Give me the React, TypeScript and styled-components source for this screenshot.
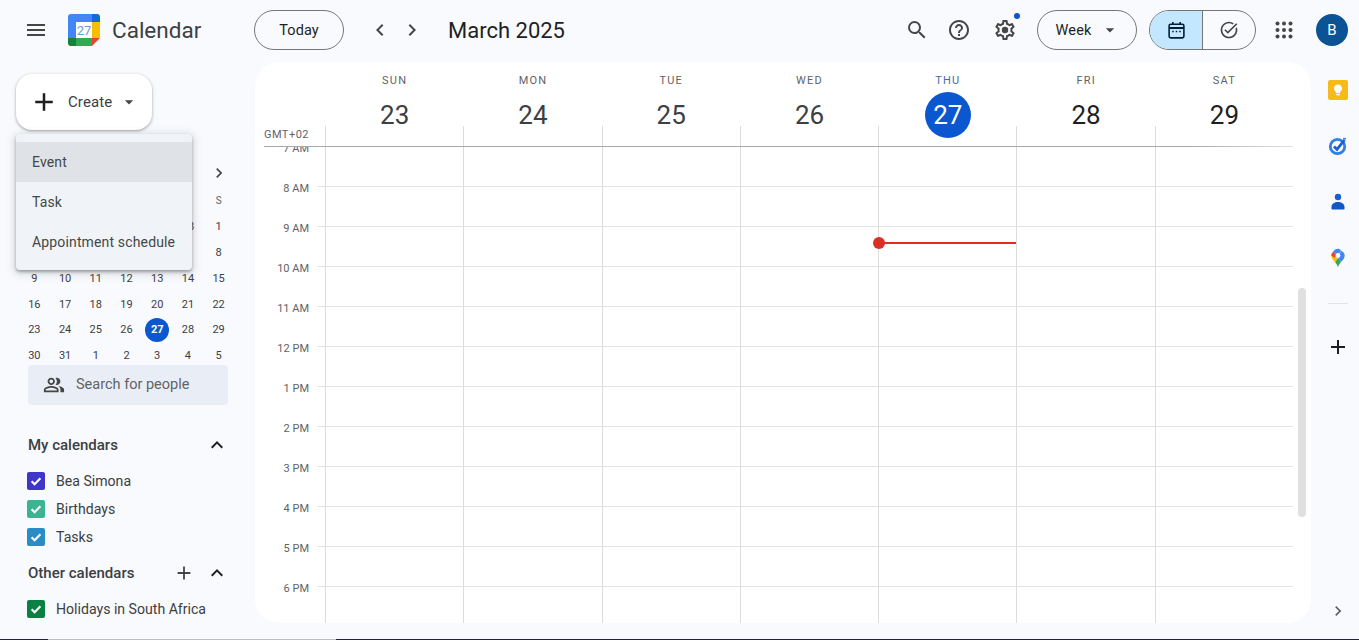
import React from "react";
import styled, { createGlobalStyle } from "styled-components";
import {
  MdMenu, MdSearch, MdHelpOutline, MdArrowDropDown, MdChevronLeft, MdChevronRight,
  MdAdd, MdExpandLess, MdOutlinePeopleAlt, MdOutlineTaskAlt,
} from "react-icons/md";

const FONT = `Roboto, "Noto Sans", Arial, sans-serif`;

const Global = createGlobalStyle`
  html, body { margin: 0; padding: 0; background: #f8fafd; }
  body { font-family: ${FONT}; color: #1f1f1f; overflow: hidden; }
  * { box-sizing: border-box; }
`;

const Page = styled.div`
  width: 1359px; height: 640px; display: flex; flex-direction: column; overflow: hidden; background: #f8fafd;
`;

/* ---------- top bar ---------- */
const TopBar = styled.header`
  height: 60px; flex: none; display: flex; align-items: center; padding-right: 11px;
`;
const Brand = styled.div`
  width: 254px; flex: none; display: flex; align-items: center; padding-left: 16px;
`;
const IconBtn = styled.button<{ $size?: number; $ml?: number; $color?: string }>`
  width: ${p => p.$size ?? 32}px; height: ${p => p.$size ?? 32}px; flex: none; padding: 0; border: 0; background: none;
  display: flex; align-items: center; justify-content: center; position: relative;
  margin-left: ${p => p.$ml ?? 0}px; color: ${p => p.$color ?? "#444746"};
`;
const BrandName = styled.span`
  font-size: 22.5px; color: #3c4043; margin-left: 12px;
`;
const PillBtn = styled.button<{ $w: number; $ml?: number }>`
  width: ${p => p.$w}px; height: 40px; flex: none; border: 1px solid #747775; border-radius: 20px; background: none;
  font: 400 14.5px ${FONT}; letter-spacing: .1px; color: #1f1f1f; display: flex; align-items: center; justify-content: center; padding: 0;
  margin-left: ${p => p.$ml ?? 0}px;
`;
const MonthTitle = styled.h1`
  margin: 0 0 0 20px; font-size: 22px; font-weight: 400; color: #1f1f1f;
`;
const TopRight = styled.div`
  margin-left: auto; display: flex; align-items: center;
`;
const Badge = styled.span`
  position: absolute; right: 5px; top: 3px; width: 6px; height: 6px; border-radius: 50%; background: #0b57d0;
`;
const WeekCaret = styled.span`
  display: flex; margin: 0 -2px 0 9px; color: #444746;
`;
const Toggle = styled.div`
  width: 107px; height: 40px; margin-left: 12px; display: flex; border: 1px solid #747775; border-radius: 20px; overflow: hidden;
`;
const ToggleSide = styled.div<{ $on?: boolean }>`
  flex: ${p => (p.$on ? "0 0 53px" : "1")}; display: flex; align-items: center; justify-content: center;
  background: ${p => (p.$on ? "#c2e7ff" : "none")}; color: ${p => (p.$on ? "#001d35" : "#444746")};
  border-right: ${p => (p.$on ? "1px solid #747775" : "0")};
`;
const AppsBtn = styled(IconBtn)`
  margin-right: -4px;
`;
const Avatar = styled.div`
  width: 32px; height: 32px; border-radius: 50%; margin-left: 16px; background: #0b5394; color: #fff;
  font-size: 15px; display: flex; align-items: center; justify-content: center;
`;

/* ---------- layout ---------- */
const Main = styled.div`
  flex: 1; min-height: 0; display: flex;
`;
const Sidebar = styled.aside`
  width: 255px; flex: none; display: flex; flex-direction: column; position: relative;
`;
const CreateBtn = styled.button`
  width: 136px; height: 56px; margin: 14px 0 0 16px; padding: 0 0 0 13px; border: 0; border-radius: 16px; background: #fff;
  box-shadow: 0 1px 2px rgba(60,64,67,.3), 0 1px 3px 1px rgba(60,64,67,.15);
  display: flex; align-items: center; font: 400 15px ${FONT}; letter-spacing: .1px; color: #3c4043; flex: none;
`;
const CreateLabel = styled.span`
  margin: 0 7px 0 9px;
`;
const CreateMenu = styled.ul`
  position: absolute; left: 16px; top: 74px; width: 176px; margin: 0; padding: 8px 0; list-style: none;
  background: #f0f4f9; border-radius: 4px; z-index: 5;
  box-shadow: 0 2px 3px rgba(60,64,67,.4), 0 2px 8px 2px rgba(60,64,67,.18);
`;
const MenuItem = styled.li<{ $active?: boolean }>`
  height: 40px; padding-left: 16px; display: flex; align-items: center; font-size: 14px; letter-spacing: .15px; color: #444746; white-space: nowrap;
  background: ${p => (p.$active ? "#dfe3e7" : "transparent")};
`;
const MiniHead = styled.div`
  height: 31px; margin-top: 27px; padding-left: 209px; flex: none; display: flex; align-items: center; color: #444746;
`;
const MiniGrid = styled.div`
  margin-left: 19px; width: 215px; display: grid; grid-template-columns: repeat(7, 1fr); grid-auto-rows: 25.8px; flex: none;
`;
const MiniCell = styled.div<{ $head?: boolean; $today?: boolean }>`
  display: flex; align-items: center; justify-content: center;
  font-size: ${p => (p.$head ? 10 : 11)}px; font-weight: ${p => (p.$today ? 700 : 400)}; color: ${p => (p.$head ? "#5f6368" : "#3c4043")};
  > span {
    width: 24px; height: 24px; flex: none; border-radius: 50%; display: flex; align-items: center; justify-content: center;
    background: ${p => (p.$today ? "#0b57d0" : "transparent")}; color: ${p => (p.$today ? "#fff" : "inherit")};
  }
`;
const PeopleSearch = styled.div`
  width: 200px; height: 40px; margin: -3.6px 0 0 28px; flex: none; display: flex; align-items: center; gap: 11px;
  padding-left: 15px; background: #e9eef6; border-radius: 4px; font-size: 14.5px; color: #5f6368; position: relative;
`;
const SectionHead = styled.div<{ $mt: number }>`
  width: 201px; height: 40px; margin: ${p => p.$mt}px 0 0 28px; flex: none; display: flex; align-items: center;
  color: #1f1f1f; font-size: 15px; font-weight: 500;
  > span { margin-right: auto; color: #3c4043; }
`;
const CalRow = styled.div<{ $mt?: number }>`
  height: 28px; margin: ${p => p.$mt ?? 0}px 0 0 27px; flex: none; display: flex; align-items: center; gap: 11px;
  font-size: 14.1px; color: #3c4043; white-space: nowrap;
`;
const Check = styled.span<{ $color: string }>`
  width: 18px; height: 18px; flex: none; border-radius: 2px; background: ${p => p.$color}; color: #fff;
  display: flex; align-items: center; justify-content: center;
`;

/* ---------- week panel ---------- */
const Panel = styled.section`
  width: 1056px; flex: none; margin: 2px 0 16px; background: #fff; border-radius: 24px; overflow: hidden; position: relative;
  display: flex; flex-direction: column;
`;
const WeekHead = styled.div`
  height: 84px; flex: none; display: grid; grid-template-columns: 70px repeat(7, 138.3px);
`;
const Gmt = styled.div`
  padding: 66px 16px 0 0; text-align: right; font-size: 11px; line-height: 14px; color: #5f6368; letter-spacing: .5px; white-space: nowrap;
`;
const DayHead = styled.div`
  position: relative; display: flex; flex-direction: column; align-items: center; padding: 12px 0 0 1px;
  &::before { content: ""; position: absolute; left: 0; top: 64px; bottom: 0; width: 1px; background: #dadce0; }
`;
const DayName = styled.div<{ $today?: boolean }>`
  font-size: 11px; line-height: 14px; font-weight: 400; letter-spacing: 1.2px; color: ${p => (p.$today ? "#3f6cae" : "#5f6368")};
`;
const DayNum = styled.div<{ $today?: boolean; $past?: boolean }>`
  width: 46px; height: 46px; margin-top: 4px; border-radius: 50%; display: flex; align-items: center; justify-content: center;
  font-size: 26px; position: relative; z-index: 1;
  background: ${p => (p.$today ? "#0b57d0" : "transparent")};
  color: ${p => (p.$today ? "#fff" : p.$past ? "#3c4043" : "#1f1f1f")};
`;
const HeadRule = styled.div`
  height: 1px; margin: 0 0 -1px 9px; width: 1030px; flex: none; position: relative; z-index: 2;
  background: linear-gradient(to right, #a8a8a8 0, #a8a8a8 90%, rgba(168,168,168,0) 100%);
`;
const Hours = styled.div`
  flex: 1; min-height: 0; overflow: hidden;
`;
const HourRow = styled.div`
  height: 40px; display: grid; grid-template-columns: 54px 8px 8px repeat(7, 138.3px);
`;
const HourLabel = styled.div`
  font-size: 11px; line-height: 14px; margin-top: -4px; text-align: right; color: #5f6368; white-space: nowrap;
`;
const Tick = styled.div`
  grid-column: 3; border-top: 1px solid #e3e3e3;
`;
const HourCell = styled.div`
  border-top: 1px solid #e3e3e3; border-left: 1px solid #dadce0; position: relative;
`;
const NowLine = styled.div`
  position: absolute; left: 0; right: 0; top: 15px; height: 2px; background: #d93025;
  &::before { content: ""; position: absolute; left: -6px; top: -5px; width: 12px; height: 12px; border-radius: 50%; background: #d93025; }
`;
const Thumb = styled.div`
  position: absolute; left: 1043px; top: 226px; width: 8px; height: 229px; border-radius: 4px; background: #e0e0e0; z-index: 3;
`;

/* ---------- right rail ---------- */
const Rail = styled.aside`
  width: 48px; flex: none; padding-top: 2px; display: flex; flex-direction: column; align-items: center; color: #1f1f1f;
`;
const RailSlot = styled.div`
  height: 56px; width: 100%; flex: none; display: flex; align-items: center; justify-content: center; padding-left: 6px;
`;
const RailDivider = styled.div`
  width: 20px; height: 1px; margin: 17px 0 0 6px; background: #e3e3e3; flex: none;
`;
const RailIcon = styled.div<{ $mt?: string; $mb?: number; $color?: string }>`
  flex: none; margin: ${p => p.$mt ?? "0"} 0 ${p => p.$mb ?? 0}px 6px; display: flex; color: ${p => p.$color ?? "#1f1f1f"};
`;
const BottomStrip = styled.div`
  height: 1px; flex: none; display: grid; grid-template-columns: 48px 288px 1fr;
`;
const StripPart = styled.i<{ $color: string }>`
  display: block; background: ${p => p.$color};
`;

/* ---------- drawings ---------- */
const Logo = () => (
  <svg width="32" height="32" viewBox="0 0 32 32" style={{ marginLeft: 12, flex: "none" }}>
    <path d="M3 0h21v8H8v16H0V3a3 3 0 0 1 3-3z" fill="#4285f4" />
    <path d="M24 0h5a3 3 0 0 1 3 3v5h-8z" fill="#1967d2" />
    <path d="M24 8h8v16h-8z" fill="#fbbc04" />
    <path d="M8 24h16v8H8z" fill="#34a853" />
    <path d="M0 24h8v8H3a3 3 0 0 1-3-3z" fill="#188038" />
    <path d="M24 24h8l-8 8z" fill="#ea4335" />
    <rect x="8" y="8" width="16" height="16" fill="#fff" />
    <text x="16" y="21" textAnchor="middle" fontSize="13" fontFamily={FONT} fill="#6d97dc">27</text>
  </svg>
);
const GearIcon = () => (
  <svg width="24" height="24" viewBox="0 0 24 24" fill="currentColor">
    <path d="M19.43 12.98c.04-.32.07-.64.07-.98 0-.34-.03-.66-.07-.98l2.11-1.65c.19-.15.24-.42.12-.64l-2-3.46c-.09-.16-.26-.25-.44-.25-.06 0-.12.01-.17.03l-2.49 1c-.52-.4-1.08-.73-1.69-.98l-.38-2.65C14.46 2.18 14.25 2 14 2h-4c-.25 0-.46.18-.49.42l-.38 2.65c-.61.25-1.17.59-1.69.98l-2.49-1c-.06-.02-.12-.03-.18-.03-.17 0-.34.09-.43.25l-2 3.46c-.13.22-.07.49.12.64l2.11 1.65c-.04.32-.07.65-.07.98 0 .33.03.66.07.98l-2.11 1.65c-.19.15-.24.42-.12.64l2 3.46c.09.16.26.25.44.25.06 0 .12-.01.17-.03l2.49-1c.52.4 1.08.73 1.69.98l.38 2.65c.03.24.24.42.49.42h4c.25 0 .46-.18.49-.42l.38-2.65c.61-.25 1.17-.59 1.69-.98l2.49 1c.06.02.12.03.18.03.17 0 .34-.09.43-.25l2-3.46c.12-.22.07-.49-.12-.64l-2.11-1.65zm-1.98-1.71c.04.31.05.52.05.73 0 .21-.02.43-.05.73l-.14 1.13.89.7 1.08.84-.7 1.21-1.27-.51-1.04-.42-.9.68c-.43.32-.84.56-1.25.73l-1.06.43-.16 1.13-.2 1.35h-1.4l-.19-1.35-.16-1.13-1.06-.43c-.43-.18-.83-.41-1.23-.71l-.91-.7-1.06.43-1.27.51-.7-1.21 1.08-.84.89-.7-.14-1.13c-.03-.31-.05-.54-.05-.74s.02-.43.05-.73l.14-1.13-.89-.7-1.08-.84.7-1.21 1.27.51 1.04.42.9-.68c.43-.32.84-.56 1.25-.73l1.06-.43.16-1.13.2-1.35h1.39l.19 1.35.16 1.13 1.06.43c.43.18.83.41 1.23.71l.91.7 1.06-.43 1.27-.51.7 1.21-1.07.85-.89.7.14 1.13z" />
    <circle cx="12" cy="12" r="3.2" />
  </svg>
);
const AppsIcon = () => (
  <svg width="24" height="24" viewBox="0 0 24 24" fill="currentColor">
    {[5.5, 12, 18.5].flatMap(y => [5.5, 12, 18.5].map(x => <circle key={`${x}-${y}`} cx={x} cy={y} r="2" />))}
  </svg>
);
const CalIcon = () => (
  <svg width="19" height="19" viewBox="0 0 18 18" fill="none" stroke="currentColor" strokeWidth="1.5">
    <rect x="2" y="3" width="14" height="13" rx="1.5" />
    <path d="M2 6.6h14" strokeWidth="2" />
    <path d="M5.5 1v2.5M12.5 1v2.5" />
    <path d="M5 10h1.4M8.3 10h1.4M11.6 10h1.4" strokeWidth="1.4" />
  </svg>
);
const CheckMark = () => (
  <svg width="14" height="14" viewBox="0 0 14 14" fill="none" stroke="currentColor" strokeWidth="2.1">
    <path d="M2.6 7.2l3 3 5.8-6" />
  </svg>
);
const KeepIcon = () => (
  <svg width="20" height="20" viewBox="0 0 20 20">
    <rect width="20" height="20" rx="2" fill="#f6bb18" />
    <path d="M10 4.5a4 4 0 0 0-2.2 7.3V13h4.4v-1.2A4 4 0 0 0 10 4.5z" fill="#fff" />
    <rect x="8.2" y="13.8" width="3.6" height="1.5" fill="#fff" />
  </svg>
);
const TasksIcon = () => (
  <svg width="20" height="20" viewBox="0 0 20 20" fill="none">
    <circle cx="9.5" cy="10.5" r="7.2" stroke="#2f7fe6" strokeWidth="2.8" />
    <path d="M6 10.4l3 3 7.5-9.4" stroke="#1a5fd0" strokeWidth="2.8" />
    <path d="M15 2.5l3 .5" stroke="#2f7fe6" strokeWidth="1.5" />
  </svg>
);
const ContactsIcon = () => (
  <svg width="20" height="20" viewBox="0 0 20 20">
    <circle cx="10" cy="5" r="3.2" fill="#1a5fd0" />
    <path d="M3.5 15c0-3.2 3.2-5 6.5-5s6.5 1.8 6.5 5v1.8a.7.7 0 0 1-.7.7H4.200a.7.7 0 0 1-.7-.7z" fill="#1257c4" />
  </svg>
);
const MapsIcon = () => (
  <svg width="20" height="20" viewBox="0 0 20 20">
    <path d="M10 19.5c-.5-2.5-1.700-4-3-5.500L10 10l3 4c-1.300 1.500-2.500 3-3 5.500z" fill="#34a853" />
    <path d="M5 4 3.300 7.800c.2 2.600 2.300 4.700 3.700 6.200L10 10z" fill="#fbbc04" />
    <path d="M10 .8C8 .8 6.500 1.800 5 4l5 3.500 3-4.800C12.200 1.300 11 .8 10 .8z" fill="#4285f4" />
    <path d="M5 3.700C4 4.800 3.300 6.200 3.300 7.800L7 9.800 8 6.500z" fill="#ea4335" />
    <path d="M13 2.700 10 10l3 4c1.500-1.700 3.700-3.500 3.700-6.500 0-2-1.500-3.900-3.700-4.800z" fill="#4285f4" />
    <circle cx="10" cy="7.500" r="2.400" fill="#fff" />
  </svg>
);

/* ---------- data ---------- */
const weekDays = [
  { n: "SUN", d: 23, past: true }, { n: "MON", d: 24, past: true }, { n: "TUE", d: 25, past: true },
  { n: "WED", d: 26, past: true }, { n: "THU", d: 27, today: true }, { n: "FRI", d: 28 }, { n: "SAT", d: 29 },
];
const hours = ["7 AM", "8 AM", "9 AM", "10 AM", "11 AM", "12 PM", "1 PM", "2 PM", "3 PM", "4 PM", "5 PM", "6 PM"];
const miniDays = [
  23, 24, 25, 26, 27, 28, 1, 2, 3, 4, 5, 6, 7, 8, 9, 10, 11, 12, 13, 14, 15, 16, 17, 18, 19, 20, 21, 22,
  23, 24, 25, 26, 27, 28, 29, 30, 31, 1, 2, 3, 4, 5,
];

export default function App() {
  return (
    <Page>
      <Global />
      <TopBar>
        <Brand>
          <IconBtn $size={40}><MdMenu size={24} /></IconBtn>
          <Logo />
          <BrandName>Calendar</BrandName>
        </Brand>
        <PillBtn $w={90}>Today</PillBtn>
        <IconBtn $ml={20}><MdChevronLeft size={24} /></IconBtn>
        <IconBtn><MdChevronRight size={24} /></IconBtn>
        <MonthTitle>March 2025</MonthTitle>
        <TopRight>
          <IconBtn $size={40}><MdSearch size={24} /></IconBtn>
          <IconBtn $size={40} $ml={2}><MdHelpOutline size={24} /></IconBtn>
          <IconBtn $size={40} $ml={6}><GearIcon /><Badge /></IconBtn>
          <PillBtn $w={100} $ml={12}>Week<WeekCaret><MdArrowDropDown size={20} /></WeekCaret></PillBtn>
          <Toggle>
            <ToggleSide $on><CalIcon /></ToggleSide>
            <ToggleSide><MdOutlineTaskAlt size={20} /></ToggleSide>
          </Toggle>
          <AppsBtn $size={40} $ml={8}><AppsIcon /></AppsBtn>
          <Avatar>B</Avatar>
        </TopRight>
      </TopBar>
      <Main>
        <Sidebar>
          <CreateBtn>
            <MdAdd size={30} color="#1f1f1f" />
            <CreateLabel>Create</CreateLabel>
            <MdArrowDropDown size={20} color="#444746" />
          </CreateBtn>
          <CreateMenu>
            <MenuItem $active>Event</MenuItem>
            <MenuItem>Task</MenuItem>
            <MenuItem>Appointment schedule</MenuItem>
          </CreateMenu>
          <MiniHead><MdChevronRight size={20} /></MiniHead>
          <MiniGrid>
            {["S", "M", "T", "W", "T", "F", "S"].map((d, i) => <MiniCell key={i} $head>{d}</MiniCell>)}
            {miniDays.map((d, i) => (
              <MiniCell key={i} $today={i === 32}><span>{d}</span></MiniCell>
            ))}
          </MiniGrid>
          <PeopleSearch><MdOutlinePeopleAlt size={22} color="#444746" />Search for people</PeopleSearch>
          <SectionHead $mt={20}><span>My calendars</span><MdExpandLess size={24} /></SectionHead>
          <CalRow $mt={2}><Check $color="#3f35c9"><CheckMark /></Check>Bea Simona</CalRow>
          <CalRow><Check $color="#3eb391"><CheckMark /></Check>Birthdays</CalRow>
          <CalRow><Check $color="#2a8cc4"><CheckMark /></Check>Tasks</CalRow>
          <SectionHead $mt={2}>
            <span>Other calendars</span>
            <MdAdd size={22} color="#444746" style={{ marginRight: 10 }} />
            <MdExpandLess size={24} />
          </SectionHead>
          <CalRow $mt={2}><Check $color="#0b8043"><CheckMark /></Check>Holidays in South Africa</CalRow>
        </Sidebar>
        <Panel>
          <WeekHead>
            <Gmt>GMT+02</Gmt>
            {weekDays.map(d => (
              <DayHead key={d.n}>
                <DayName $today={d.today}>{d.n}</DayName>
                <DayNum $today={d.today} $past={d.past}>{d.d}</DayNum>
              </DayHead>
            ))}
          </WeekHead>
          <HeadRule />
          <Hours>
            {hours.map((h, r) => (
              <HourRow key={h}>
                <HourLabel>{h}</HourLabel>
                <Tick />
                {weekDays.map((d, c) => (
                  <HourCell key={d.n}>{r === 2 && c === 4 && <NowLine />}</HourCell>
                ))}
              </HourRow>
            ))}
          </Hours>
          <Thumb />
        </Panel>
        <Rail>
          <RailSlot><KeepIcon /></RailSlot>
          <RailSlot><TasksIcon /></RailSlot>
          <RailSlot><ContactsIcon /></RailSlot>
          <RailSlot><MapsIcon /></RailSlot>
          <RailDivider />
          <RailIcon $mt="31px"><MdAdd size={24} /></RailIcon>
          <RailIcon $mt="auto" $mb={18} $color="#5f6368"><MdChevronRight size={20} /></RailIcon>
        </Rail>
      </Main>
      <BottomStrip>
        <StripPart $color="#1f2a30" />
        <StripPart $color="#bdbdbd" />
        <StripPart $color="#1f2a30" />
      </BottomStrip>
    </Page>
  );
}
